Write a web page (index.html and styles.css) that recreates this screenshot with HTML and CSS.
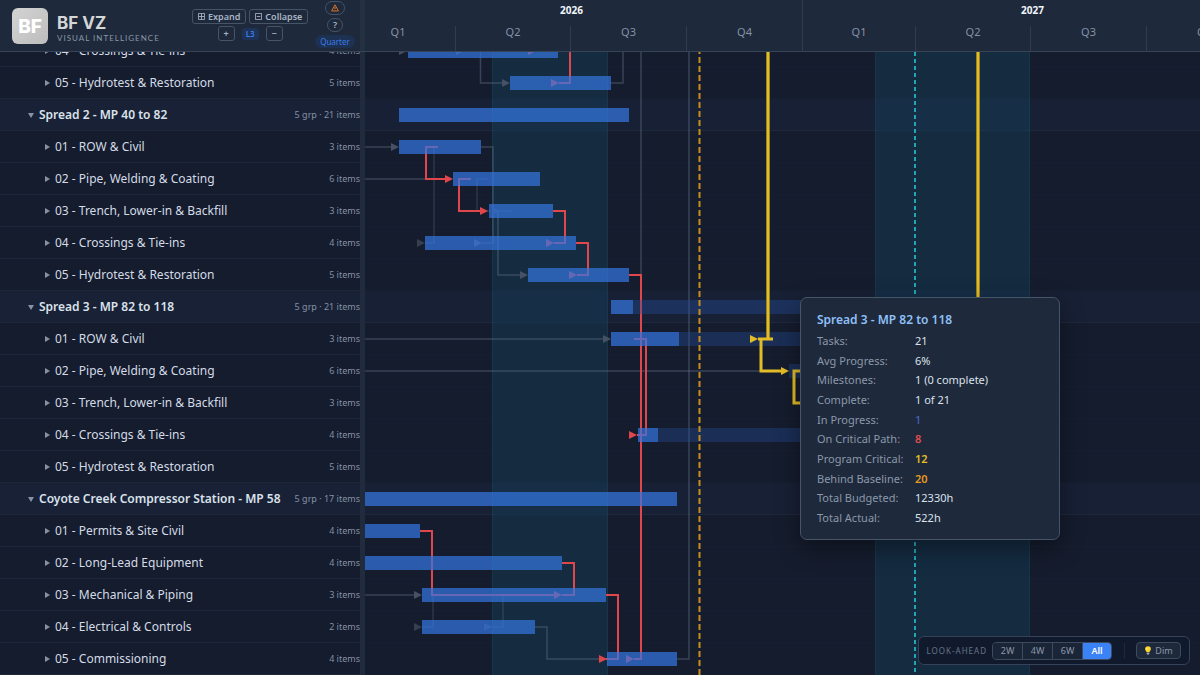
FILE: index.html
```html
<!DOCTYPE html>
<html lang="en">
<head>
<meta charset="utf-8">
<title>BF VZ</title>
<link rel="stylesheet" href="styles.css">
</head>
<body>
<div class="app">
  <header class="header">
    <div class="toolbar">
      <div class="logo">BF</div>
      <div class="brand">
        <div class="brand-name">BF VZ</div>
        <div class="brand-tag">VISUAL INTELLIGENCE</div>
      </div>
      <div class="levels">
        <div class="levels-row">
          <button class="btn" type="button"><svg class="ico" viewBox="0 0 8 8"><path d="M.5.5h7v7h-7zM.5 4h7M4 .5v7"/></svg>Expand</button>
          <button class="btn" type="button"><svg class="ico" viewBox="0 0 8 8"><path d="M.5.5h7v7h-7zM2 4h4"/></svg>Collapse</button>
        </div>
        <div class="levels-row levels-step">
          <button class="btn btn-step" type="button">+</button>
          <span class="level">L3</span>
          <button class="btn btn-step" type="button">−</button>
        </div>
      </div>
      <div class="status">
        <button class="pill pill-warn" type="button" aria-label="Warnings"><svg class="warn" viewBox="0 0 8 8"><path d="M4 .8L7.4 7H.6zM4 3v2M4 5.600v.7"/></svg></button>
        <button class="pill" type="button">?</button>
        <span class="zoom">Quarter</span>
      </div>
    </div>
    <div class="scale">
      <div class="scale-row years">
        <span class="cell" style="width:462px">2026</span><span class="cell" style="width:460px">2027</span>
      </div>
      <div class="scale-row quarters">
        <span class="cell" style="width:115px">Q1</span><span class="cell" style="width:115px">Q2</span><span class="cell" style="width:116px">Q3</span><span class="cell" style="width:116px">Q4</span><span class="cell" style="width:113px">Q1</span><span class="cell" style="width:115px">Q2</span><span class="cell" style="width:116px">Q3</span><span class="cell" style="width:116px">Q4</span>
      </div>
    </div>
  </header>

  <main class="body">
    <ul class="tree">
      <li class="row"><i class="caret"></i><span class="name">04 - Crossings &amp; Tie-ins</span><span class="count">4 items</span></li>
      <li class="row"><i class="caret"></i><span class="name">05 - Hydrotest &amp; Restoration</span><span class="count">5 items</span></li>
      <li class="row group"><i class="caret"></i><span class="name">Spread 2 - MP 40 to 82</span><span class="count">5 grp · 21 items</span></li>
      <li class="row"><i class="caret"></i><span class="name">01 - ROW &amp; Civil</span><span class="count">3 items</span></li>
      <li class="row"><i class="caret"></i><span class="name">02 - Pipe, Welding &amp; Coating</span><span class="count">6 items</span></li>
      <li class="row"><i class="caret"></i><span class="name">03 - Trench, Lower-in &amp; Backfill</span><span class="count">3 items</span></li>
      <li class="row"><i class="caret"></i><span class="name">04 - Crossings &amp; Tie-ins</span><span class="count">4 items</span></li>
      <li class="row"><i class="caret"></i><span class="name">05 - Hydrotest &amp; Restoration</span><span class="count">5 items</span></li>
      <li class="row group"><i class="caret"></i><span class="name">Spread 3 - MP 82 to 118</span><span class="count">5 grp · 21 items</span></li>
      <li class="row"><i class="caret"></i><span class="name">01 - ROW &amp; Civil</span><span class="count">3 items</span></li>
      <li class="row"><i class="caret"></i><span class="name">02 - Pipe, Welding &amp; Coating</span><span class="count">6 items</span></li>
      <li class="row"><i class="caret"></i><span class="name">03 - Trench, Lower-in &amp; Backfill</span><span class="count">3 items</span></li>
      <li class="row"><i class="caret"></i><span class="name">04 - Crossings &amp; Tie-ins</span><span class="count">4 items</span></li>
      <li class="row"><i class="caret"></i><span class="name">05 - Hydrotest &amp; Restoration</span><span class="count">5 items</span></li>
      <li class="row group"><i class="caret"></i><span class="name">Coyote Creek Compressor Station - MP 58</span><span class="count">5 grp · 17 items</span></li>
      <li class="row"><i class="caret"></i><span class="name">01 - Permits &amp; Site Civil</span><span class="count">4 items</span></li>
      <li class="row"><i class="caret"></i><span class="name">02 - Long-Lead Equipment</span><span class="count">4 items</span></li>
      <li class="row"><i class="caret"></i><span class="name">03 - Mechanical &amp; Piping</span><span class="count">3 items</span></li>
      <li class="row"><i class="caret"></i><span class="name">04 - Electrical &amp; Controls</span><span class="count">2 items</span></li>
      <li class="row"><i class="caret"></i><span class="name">05 - Commissioning</span><span class="count">4 items</span></li>
    </ul>
    <div class="splitter"></div>
    <div class="chart">
      <div class="lane"></div><div class="lane"></div><div class="lane group"></div>
      <div class="lane"></div><div class="lane"></div><div class="lane"></div><div class="lane"></div><div class="lane"></div><div class="lane group"></div>
      <div class="lane"></div><div class="lane"></div><div class="lane"></div><div class="lane"></div><div class="lane"></div><div class="lane group"></div>
      <div class="lane"></div><div class="lane"></div><div class="lane"></div><div class="lane"></div><div class="lane"></div>
      <svg class="plot" aria-hidden="true">
        <defs>
          <path id="tip" d="M-8 -4L0 0L-8 4z"/>
        </defs>
        <g transform="translate(-365 -35)">
          <g class="season">
            <rect x="492" y="35" width="116" height="660"/>
            <rect x="875" y="35" width="155" height="660"/>
          </g>
          <path class="season-edge" d="M492.500 35V695M607.500 35V695M875.500 35V695M1029.500 35V695"/>

          <g class="link">
            <path d="M480.500 35V83H503M611 83H623V35M641 35V275M689 35V659H677"/>
            <path d="M365 147H392M365 179H426M481 147H493V243H482"/>
            <path d="M498 211V275H521M365 339H604M365 371H761M365 595H415M535 627H547V659H600"/>
            <path class="dim" d="M434 147V243H425M488 179H477V211H490M512 211H498M433 595V627H422M503 595V627H492"/>
          </g>
          <g class="link-tip">
            <use href="#tip" x="407" y="51"/><use href="#tip" x="464" y="51"/>
            <use href="#tip" x="510" y="83"/><use href="#tip" x="399" y="147"/>
            <use href="#tip" x="482" y="243"/><use href="#tip" x="528" y="275"/>
            <use href="#tip" x="611" y="339"/><use href="#tip" x="422" y="595"/>
            <g class="dim"><use href="#tip" x="425" y="243"/><use href="#tip" x="500" y="211"/>
            <use href="#tip" x="422" y="627"/><use href="#tip" x="492" y="627"/></g>
          </g>

          <g class="critical">
            <path d="M570 35V83H559M438 147H426V179H447M471 179H459V211H482M553 211H565V243H554M576 243H588V275H577M629 275H641V659H634M634 339H646V435H637"/>
            <path d="M420 531H432V595H556M562 563H574V595H562M606 595H618V659H606"/>
          </g>
          <g class="critical-tip">
            <use href="#tip" x="536" y="51"/><use href="#tip" x="559" y="83"/>
            <use href="#tip" x="453" y="179"/><use href="#tip" x="488" y="211"/>
            <use href="#tip" x="554" y="243"/><use href="#tip" x="577" y="275"/>
            <use href="#tip" x="637" y="435"/><use href="#tip" x="562" y="595"/>
            <use href="#tip" x="607" y="659"/><use href="#tip" x="634" y="659"/>
          </g>

          <g class="planned">
            <rect x="633" y="300" width="260" height="14"/>
            <rect x="679" y="332" width="190" height="14"/>
            <rect x="789" y="364" width="120" height="14"/>
            <rect x="658" y="428" width="220" height="14"/>
          </g>
          <g class="done">
            <rect x="408" y="44" width="150" height="14"/>
            <rect x="510" y="76" width="101" height="14"/>
            <rect x="399" y="108" width="230" height="14"/>
            <rect x="399" y="140" width="82" height="14"/>
            <rect x="453" y="172" width="87" height="14"/>
            <rect x="489" y="204" width="64" height="14"/>
            <rect x="425" y="236" width="151" height="14"/>
            <rect x="528" y="268" width="101" height="14"/>
            <rect x="611" y="300" width="22" height="14"/>
            <rect x="611" y="332" width="68" height="14"/>
            <rect x="638" y="428" width="20" height="14"/>
            <rect x="365" y="492" width="312" height="14"/>
            <rect x="365" y="524" width="55" height="14"/>
            <rect x="365" y="556" width="197" height="14"/>
            <rect x="422" y="588" width="184" height="14"/>
            <rect x="422" y="620" width="113" height="14"/>
            <rect x="607" y="652" width="70" height="14"/>
          </g>

          <path class="today" d="M699.500 48V695"/>
          <path class="marker" d="M915 52V695"/>
          <path class="program-halo" d="M978 35V330M768 35V339"/>
          <path class="program" d="M978 35V330M768 35V339M758 339H773M761 339V371H782M810 371H794V403H810"/>
          <g class="program-tip"><use href="#tip" x="758" y="339"/><use href="#tip" x="789" y="371"/></g>
        </g>
      </svg>
    </div>
  </main>

  <section class="tooltip" role="tooltip">
    <h2 class="tooltip-title">Spread 3 - MP 82 to 118</h2>
    <dl class="facts">
      <dt>Tasks:</dt><dd>21</dd>
      <dt>Avg Progress:</dt><dd>6%</dd>
      <dt>Milestones:</dt><dd>1 (0 complete)</dd>
      <dt>Complete:</dt><dd>1 of 21</dd>
      <dt>In Progress:</dt><dd class="blue">1</dd>
      <dt>On Critical Path:</dt><dd class="red">8</dd>
      <dt>Program Critical:</dt><dd class="yellow">12</dd>
      <dt>Behind Baseline:</dt><dd class="amber">20</dd>
      <dt>Total Budgeted:</dt><dd>12330h</dd>
      <dt>Total Actual:</dt><dd>522h</dd>
    </dl>
  </section>

  <div class="lookahead">
    <span class="lookahead-label">LOOK-AHEAD</span>
    <div class="segments">
      <button class="segment" type="button">2W</button>
      <button class="segment" type="button">4W</button>
      <button class="segment" type="button">6W</button>
      <button class="segment active" type="button">All</button>
    </div>
    <span class="rule"></span>
    <button class="dim-btn" type="button"><svg class="bulb" viewBox="0 0 8 10"><path fill="#fbd52b" d="M4 .3a3.200 3.200 0 0 0-3.200 3.200C.8 5 2.300 5.500 2.400 7h3.200C5.700 5.500 7.200 5 7.200 3.500A3.200 3.200 0 0 0 4 .3z"/><path fill="#9aa7b8" d="M2.500 7.400h3v1.300L4.600 9.600H3.400l-.9-.9z"/><path fill="#fff3a8" d="M2.200 2.200h1.200v1.600H2.200z"/></svg>Dim</button>
  </div>
</div>
</body>
</html>
```
FILE: styles.css
```css
* { box-sizing: border-box; }

body {
  margin: 0;
  background: #151c2d;
  color: #d3dbe6;
  font-family: "Noto Sans", "Open Sans", sans-serif;
  font-size: 12px;
}

button {
  margin: 0;
  padding: 0;
  font: inherit;
  color: inherit;
  background: none;
  border: 0;
}

.app {
  position: relative;
  display: flex;
  flex-direction: column;
  height: 100vh;
  overflow: hidden;
}

/* Header */
.header {
  display: flex;
  flex: none;
  height: 52px;
  background: #1e293b;
  border-bottom: 1px solid #354457;
}

.toolbar {
  display: flex;
  flex: none;
  align-items: center;
  width: 365px;
  padding: 0 5px 0 12px;
  border-right: 5px solid #243143;
}

.logo {
  display: flex;
  align-items: center;
  justify-content: center;
  width: 36px;
  height: 36px;
  padding-top: 2px;
  border-radius: 6px;
  background: linear-gradient(135deg, #d3d3d3, #bdbdbd);
  color: #fff;
  font: 800 19px/34px Inter, sans-serif;
}

.brand { margin-left: 9px; padding-top: 4px; width: 135px; color: #d4d6d8; }
.brand-name { font: 700 17px/20px Inter, sans-serif; }
.brand-tag {
  font: 400 8px/10px Lato, sans-serif;
  letter-spacing: 1px;
  color: #8b98a9;
  white-space: nowrap;
}

.levels { display: flex; flex-direction: column; gap: 2px; padding-bottom: 1px; }
.levels-row { display: flex; gap: 3px; }
.levels-step { justify-content: center; align-items: center; gap: 7px; }

.btn {
  display: flex;
  align-items: center;
  gap: 3px;
  height: 15px;
  padding: 0 5px;
  border: 1px solid #465467;
  border-radius: 3px;
  color: #a9b5c5;
  font-size: 9px;
  font-weight: 600;
}

.btn-step { width: 17px; justify-content: center; padding: 0; }
.ico { width: 7px; height: 7px; fill: none; stroke: currentColor; stroke-width: 1; }

.level {
  padding: 0 4px;
  border-radius: 3px;
  background: #1d3358;
  color: #3b7ce8;
  font-size: 8px;
  line-height: 12px;
  font-weight: 600;
}

.status {
  display: flex;
  flex-direction: column;
  align-items: center;
  gap: 3px;
  margin-left: auto;
  padding-bottom: 2px;
  width: 40px;
}

.pill {
  display: flex;
  align-items: center;
  justify-content: center;
  width: 16px;
  height: 14px;
  border: 1px solid #465467;
  border-radius: 8px;
  color: #a9b5c5;
  font-size: 9px;
  line-height: 12px;
  font-weight: 600;
}

.pill-warn { width: 20px; color: #d87324; }
.warn { width: 8px; height: 8px; fill: none; stroke: currentColor; stroke-width: 1; }

.zoom {
  width: 40px;
  border-radius: 7px;
  background: #1d3152;
  color: #3b7ce8;
  font-size: 8px;
  line-height: 13px;
  text-align: center;
}

/* Time scale */
.scale { flex: 1; min-width: 0; overflow: hidden; }
.scale-row { display: flex; margin-left: -24px; }
.cell { flex: none; text-align: center; border-right: 1px solid #303d50; }
.years .cell { height: 26px; line-height: 21px; font-size: 10px; font-weight: 700; color: #f1f5f9; }
.quarters .cell { height: 26px; line-height: 12px; font-size: 11px; color: #8592a6; }

/* Tree and lanes */
.body { display: flex; flex: 1; min-height: 0; overflow: hidden; }

.tree {
  flex: none;
  width: 360px;
  margin: -17px 0 0;
  padding: 0;
  list-style: none;
}

.row {
  display: flex;
  align-items: center;
  height: 32px;
  padding-left: 45px;
  border-bottom: 1px solid #1c2739;
}

.row.group { padding-left: 28px; background: #182135; font-weight: 600; color: #dbe2ec; }
.name { flex: 1; white-space: nowrap; }
.count { color: #8491a4; font-size: 9px; font-weight: 400; white-space: nowrap; }

.caret {
  width: 5px;
  margin-right: 5px;
  border: 3px solid transparent;
  border-left: 5px solid #8793a5;
  border-right: 0;
}

.group .caret {
  width: 6px;
  margin-top: 2px;
  border: 3px solid transparent;
  border-top: 5px solid #8793a5;
  border-bottom: 0;
}

.splitter { flex: none; width: 5px; background: #202c3e; }

.chart { position: relative; flex: 1; min-width: 0; margin-top: -17px; }
.lane { height: 32px; border-bottom: 1px solid #161f31; }
.lane.group { background: #182035; border-bottom-color: #1e283a; }

.plot { position: absolute; inset: 0; width: 100%; height: 100%; }
.plot path { fill: none; }
.season { fill: #14506c; opacity: 0.300; }
.season-edge { stroke: #1d6a75; opacity: 0.200; }
.link { stroke: #64748b; stroke-opacity: 0.450; }
.link .dim { stroke-opacity: 0.300; }
.link path { stroke-width: 1.500; }
.plot #tip { fill: inherit; }
.link-tip { fill: #465164; }
.link-tip .dim { fill: #343f50; }
.critical { stroke: #e0474c; stroke-width: 2; }
.critical-tip { fill: #e0474c; }
.planned { fill: #2451a4; opacity: 0.350; }
.done { fill: #3577e2; opacity: 0.700; }
.today { stroke: #c98d1c; stroke-width: 2; stroke-dasharray: 6 3; }
.marker { stroke: #22a5b4; stroke-width: 2; stroke-dasharray: 4 3; }
.program { stroke: #e3bd26; stroke-width: 3; }
.program-halo { stroke: #4a4722; stroke-width: 4; }
.program-tip { fill: #e3bd26; }

/* Tooltip */
.tooltip {
  position: absolute;
  left: 800px;
  top: 297px;
  width: 260px;
  padding: 12px 16px 11px;
  border: 1px solid #465467;
  border-radius: 7px;
  background: #1e293b;
  box-shadow: 0 8px 24px rgba(0, 0, 0, 0.4);
}

.tooltip-title { margin: 0 0 1px; font-size: 12px; line-height: 20px; font-weight: 600; color: #8fc0f8; }
.facts {
  display: grid;
  grid-template-columns: 98px 1fr;
  grid-auto-rows: 1fr;
  align-items: center;
  min-height: 197px;
  margin: 0;
  font-size: 11px;
  line-height: 16px;
}
.facts dt { color: #8b98aa; }
.facts dd { margin: 0; color: #dbe2ec; }
.facts .blue { color: #4a6fd0; }
.facts .red { color: #e34f51; font-weight: 600; }
.facts .yellow { color: #e3bd26; font-weight: 600; }
.facts .amber { color: #e79a1c; font-weight: 600; }

/* Look-ahead bar */
.lookahead {
  position: absolute;
  right: 10px;
  bottom: 10px;
  display: flex;
  align-items: center;
  height: 29px;
  padding: 0 8px;
  border: 1px solid #34425a;
  border-radius: 6px;
  background: #111a2c;
  color: #8b98aa;
}

.lookahead-label { margin-right: 5px; font-size: 8px; letter-spacing: 1px; color: #66748a; }
.segments { display: flex; border: 1px solid #3d4b60; border-radius: 4px; overflow: hidden; }
.segment { width: 30px; height: 16px; background: #1a2538; font-size: 9px; border-right: 1px solid #3d4b60; }
.segment.active { width: 28px; border-right: 0; background: #3b82f6; color: #fff; font-weight: 600; }
.rule { width: 1px; height: 16px; margin: 0 11px 0 12px; background: #1e293b; }
.dim-btn {
  display: flex;
  align-items: center;
  justify-content: center;
  gap: 3px;
  width: 45px;
  height: 17px;
  border: 1px solid #3d4b60;
  border-radius: 4px;
  background: #1e293b;
  font-size: 9px;
}
.bulb { width: 8px; height: 9px; }
```
